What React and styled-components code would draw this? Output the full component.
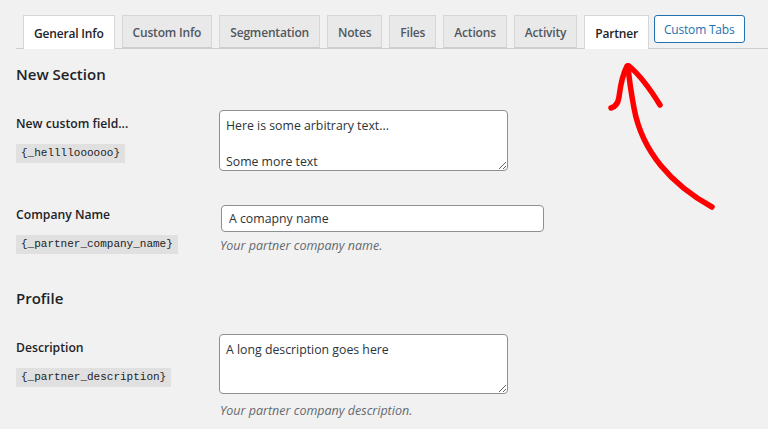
import React from "react";
import styled, { createGlobalStyle } from "styled-components";

const Global = createGlobalStyle`
  html, body { margin: 0; padding: 0; }
  body {
    background: #f1f1f1;
    font-family: "Open Sans", "Noto Sans", sans-serif;
    color: #1d2327;
    width: 768px;
    height: 429px;
    overflow: hidden;
  }
`;

const Page = styled.div`
  position: relative;
  width: 768px;
  height: 429px;
  overflow: hidden;
`;

const TabBar = styled.nav`
  display: flex;
  align-items: flex-start;
  margin: 0 0 0 16px;
  padding: 15px 0 0 7px;
  border-bottom: 1px solid #cdcdcd;
  height: 33px;
`;

const Tab = styled.div`
  box-sizing: border-box;
  height: ${(p) => (p.$active ? "34px" : "33px")};
  margin-left: ${(p) => (p.$first ? "0" : "7px")};
  padding: 2px 10px 0;
  display: flex;
  align-items: center;
  font-size: 12px;
  font-weight: 600;
  letter-spacing: -0.18px;
  border: 1px solid #d6d6d6;
  border-bottom: ${(p) => (p.$active ? "none" : "1px solid #cdcdcd")};
  background: ${(p) => (p.$active ? "#fff" : "#e9e9e9")};
  color: ${(p) => (p.$active ? "#1d2327" : "#50575e")};
  white-space: nowrap;
`;

const TabButton = styled.button`
  box-sizing: border-box;
  height: 28px;
  margin-left: 5px;
  padding: 0 9px;
  font-family: inherit;
  font-size: 12px;
  letter-spacing: -0.2px;
  white-space: nowrap;
  background: #fff;
  color: #2271b1;
  border: 1px solid #2271b1;
  border-radius: 3px;
`;

const Content = styled.div`
  padding-left: 16px;
`;

const SectionTitle = styled.h2`
  margin: ${(p) => p.$mt}px 0 0;
  font-size: 15px;
  font-weight: 600;
  line-height: 20px;
  color: #1d2327;
`;

const Row = styled.div`
  display: grid;
  grid-template-columns: 203px 1fr;
  align-items: start;
  margin-top: ${(p) => p.$mt}px;
`;

const LabelCell = styled.div`
  padding-top: ${(p) => p.$pt}px;
  display: flex;
  flex-direction: column;
  align-items: flex-start;
`;

const Label = styled.label`
  font-size: 12.2px;
  font-weight: 600;
  line-height: 20px;
  color: #1d2327;
`;

const Code = styled.code`
  margin-top: 10px;
  padding: 0 5px;
  height: 19px;
  line-height: 19px;
  font-family: "Liberation Mono", monospace;
  font-size: 11px;
  background: rgba(0, 0, 0, 0.07);
  color: #1d2327;
`;

const FieldCell = styled.div`
  display: flex;
  flex-direction: column;
  align-items: flex-start;
`;

const TextArea = styled.textarea`
  box-sizing: border-box;
  display: block;
  width: 289px;
  height: ${(p) => p.$h}px;
  padding: 6px 6px;
  font-family: inherit;
  font-size: 12.3px;
  line-height: 18px;
  color: #2c3338;
  background: #fff;
  border: 1px solid #8c8f94;
  border-radius: 4px;
  overflow: hidden;
`;

const Input = styled.input`
  box-sizing: border-box;
  display: block;
  width: 323px;
  height: 27px;
  margin-left: 2px;
  padding: 0 7px;
  font-family: inherit;
  font-size: 12.3px;
  color: #2c3338;
  background: #fff;
  border: 1px solid #8c8f94;
  border-radius: 4px;
`;

const Description = styled.p`
  margin: ${(p) => p.$mt}px 0 0 1px;
  font-size: 12.5px;
  font-style: italic;
  line-height: 18px;
  color: #646970;
`;

const ArrowSvg = styled.svg`
  position: absolute;
  left: 0;
  top: 0;
  pointer-events: none;
`;

const tabs = [
  "General Info",
  "Custom Info",
  "Segmentation",
  "Notes",
  "Files",
  "Actions",
  "Activity",
];

export default function App() {
  const code1 = "{_he" + "l".repeat(4) + "o".repeat(6) + "}";
  return (
    <Page>
      <Global />
      <TabBar>
        {tabs.map((t, i) => (
          <Tab key={t} $first={i === 0} $active={i === 0}>
            {t}
          </Tab>
        ))}
        <Tab $active>Partner</Tab>
        <TabButton>Custom Tabs</TabButton>
      </TabBar>
      <Content>
        <SectionTitle $mt={15}>New Section</SectionTitle>
        <Row $mt={26}>
          <LabelCell $pt={4}>
            <Label>New custom field...</Label>
            <Code>{code1}</Code>
          </LabelCell>
          <FieldCell>
            <TextArea
              $h={61}
              readOnly
              value={"Here is some arbitrary text...\n\nSome more text"}
            />
          </FieldCell>
        </Row>
        <Row $mt={34}>
          <LabelCell $pt={0}>
            <Label>Company Name</Label>
            <Code>{"{_partner_company_name}"}</Code>
          </LabelCell>
          <FieldCell>
            <Input readOnly value="A comapny name" />
            <Description $mt={5}>Your partner company name.</Description>
          </FieldCell>
        </Row>
        <SectionTitle $mt={33}>Profile</SectionTitle>
        <Row $mt={26}>
          <LabelCell $pt={4}>
            <Label>Description</Label>
            <Code>{"{_partner_description}"}</Code>
          </LabelCell>
          <FieldCell>
            <TextArea $h={60} readOnly value="A long description goes here" />
            <Description $mt={8}>Your partner company description.</Description>
          </FieldCell>
        </Row>
      </Content>
      <ArrowSvg width="768" height="429" viewBox="0 0 768 429">
        <g
          fill="none"
          stroke="#ff0000"
          strokeWidth="5.5"
          strokeLinecap="round"
          strokeLinejoin="round"
        >
          <path d="M712 207 C 672 185, 642 152, 634 108 C 631 92, 629 78, 628 66" />
          <path d="M629 66 C 641 76, 652 92, 660 105" />
          <path d="M627 66 C 621 78, 620 90, 619 97 C 618 104, 615 107, 611 108" />
        </g>
      </ArrowSvg>
    </Page>
  );
}
